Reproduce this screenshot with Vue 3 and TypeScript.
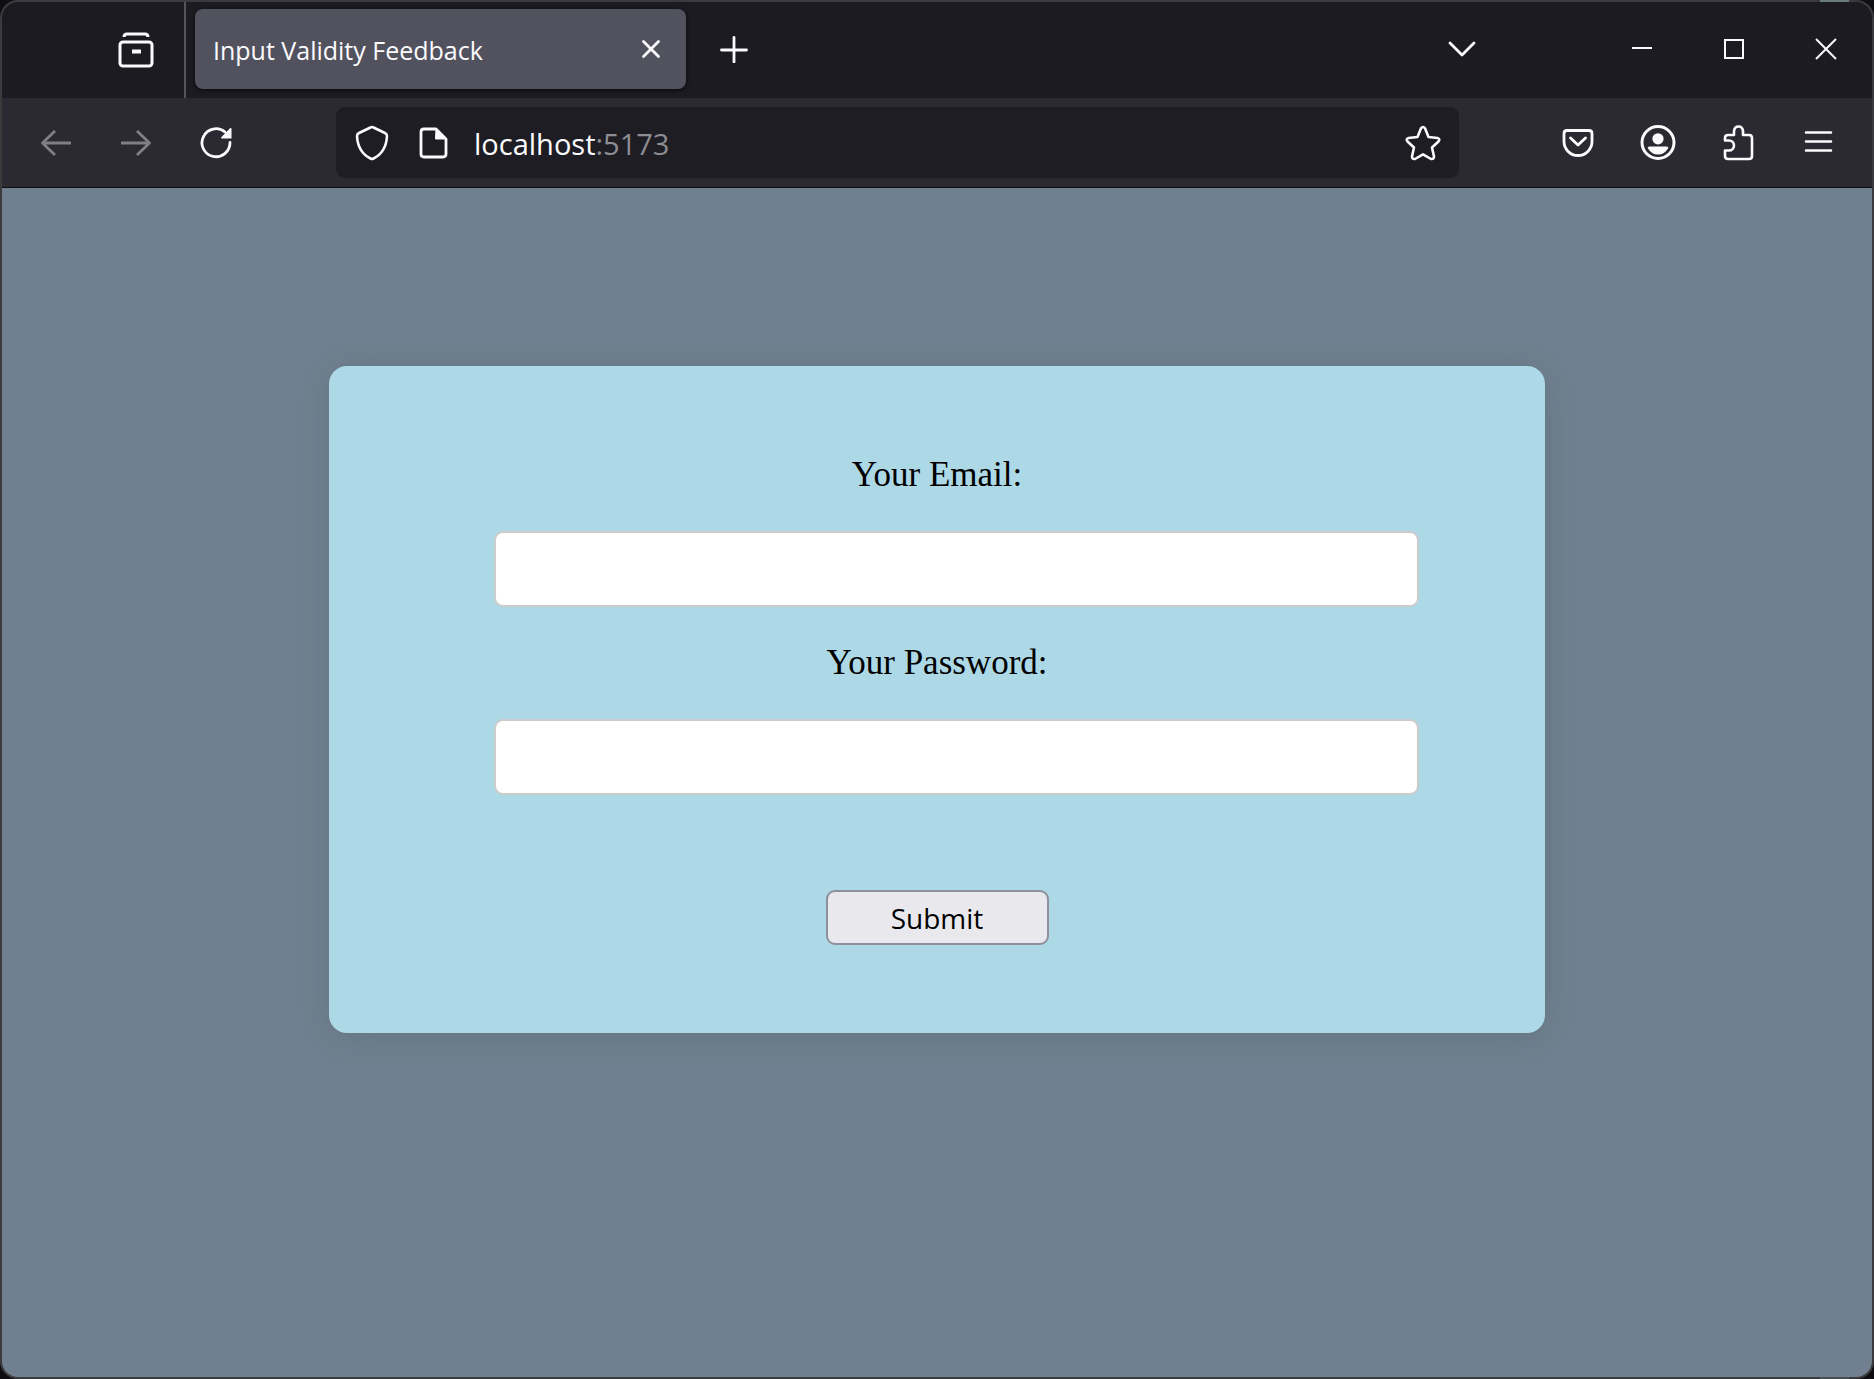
<script setup lang="ts">
import { ref } from 'vue'

const email = ref('')
const password = ref('')
</script>

<template>
  <div class="frame">
    <div class="window">
      <header class="tabbar">
        <button class="archive" aria-label="Firefox View">
          <svg width="36" height="36" viewBox="0 0 36 36">
            <path d="M6 5Q6 2 9 2H27Q30 2 30 5" fill="none" stroke="currentColor" stroke-width="3" />
            <rect x="2" y="10" width="32" height="24" rx="3" fill="none" stroke="currentColor" stroke-width="3" />
            <path d="M14 19.500H23" stroke="currentColor" stroke-width="4" />
          </svg>
        </button>
        <div class="tab">
          <span class="tab-title">Input Validity Feedback</span>
          <button class="tab-close" aria-label="Close tab">
            <svg width="20" height="20" viewBox="0 0 20 20">
              <path d="M2.500 2.500L17.500 17.500M17.500 2.500L2.500 17.500" fill="none" stroke="currentColor" stroke-width="2.800" stroke-linecap="round" />
            </svg>
          </button>
        </div>
        <button class="new-tab" aria-label="New tab">
          <svg width="28" height="28" viewBox="0 0 28 28">
            <path d="M14 2.500V27M1.500 15H26.500" stroke="currentColor" stroke-width="2.800" stroke-linecap="round" />
          </svg>
        </button>
        <button class="list-tabs" aria-label="List all tabs">
          <svg width="28" height="16" viewBox="0 0 28 16">
            <path d="M2 2L14 14L26 2" fill="none" stroke="currentColor" stroke-width="2.800" stroke-linecap="round" stroke-linejoin="round" />
          </svg>
        </button>
        <div class="controls">
          <button aria-label="Minimize">
            <svg width="20" height="22" viewBox="0 0 20 22"><path d="M0 10H20" stroke="currentColor" stroke-width="2" /></svg>
          </button>
          <button aria-label="Maximize">
            <svg width="20" height="20" viewBox="0 0 20 20"><rect x="1" y="1" width="18" height="18" fill="none" stroke="currentColor" stroke-width="2" /></svg>
          </button>
          <button aria-label="Close">
            <svg width="22" height="22" viewBox="0 0 22 22"><path d="M1 1L21 21M21 1L1 21" stroke="currentColor" stroke-width="2" /></svg>
          </button>
        </div>
      </header>

      <nav class="toolbar">
        <button class="tool" aria-label="Back" disabled>
          <svg width="36" height="36" viewBox="0 0 36 36">
            <path d="M33 18H4M17 6L4.500 18L17 30" fill="none" stroke="currentColor" stroke-width="2.800" stroke-linejoin="round" />
          </svg>
        </button>
        <button class="tool" aria-label="Forward" disabled>
          <svg width="36" height="36" viewBox="0 0 36 36">
            <path d="M3 18H32M19 6L31.500 18L19 30" fill="none" stroke="currentColor" stroke-width="2.800" stroke-linejoin="round" />
          </svg>
        </button>
        <button class="tool" aria-label="Reload">
          <svg width="36" height="36" viewBox="0 0 36 36">
            <path d="M32 17.500A14 14 0 1 1 27 7" fill="none" stroke="currentColor" stroke-width="2.800" stroke-linecap="round" />
            <path d="M33.500 3.500V13.500H23.500Q22.500 13 23.500 12L32 3.200Q33 2.500 33.500 3.500Z" fill="currentColor" />
          </svg>
        </button>
        <div class="address">
          <svg class="shield" width="36" height="36" viewBox="0 0 36 36">
            <path d="M16.500 2.500Q18 1.500 19.500 2.500L31 8Q33 9 33 11C32.500 21 28.500 29 19.500 33.500Q18 34.300 16.500 33.500C7.500 29 3.500 21 3 11Q3 9 5 8Z" fill="none" stroke="currentColor" stroke-width="2.600" />
          </svg>
          <svg class="document" width="36" height="36" viewBox="0 0 36 36">
            <path d="M8 4H20L30 14V29Q30 32 27 32H8Q5 32 5 29V7Q5 4 8 4Z" fill="none" stroke="currentColor" stroke-width="2.800" stroke-linejoin="round" />
            <path d="M20 4L30 14H19.500Z" fill="currentColor" stroke="currentColor" />
          </svg>
          <span class="url">localhost<span class="port">:5173</span></span>
          <button class="star" aria-label="Bookmark this page">
            <svg width="36" height="36" viewBox="0 0 36 36">
              <path d="M16 3.300Q18 .8 20 3.300L23.500 12L32.500 13Q35.500 14 33.500 16.500L27 22.500L29 31.500Q29 34.500 26 34L18 29.300L10 34Q7 34.500 7 31.500L9 22.500L2.500 16.500Q.5 14 3.500 13L12.500 12Z" fill="none" stroke="currentColor" stroke-width="2.600" stroke-linejoin="round" />
            </svg>
          </button>
        </div>
        <button class="tool" aria-label="Save to Pocket">
          <svg width="36" height="36" viewBox="0 0 36 36">
            <path d="M7 5.500H29Q32 5.500 32 8.500V16.500A14 14 0 0 1 4 16.500V8.500Q4 5.500 7 5.500Z" fill="none" stroke="currentColor" stroke-width="2.800" />
            <path d="M10.500 13L18 20L25.500 13" fill="none" stroke="currentColor" stroke-width="2.800" stroke-linecap="round" stroke-linejoin="round" />
          </svg>
        </button>
        <button class="tool" aria-label="Account">
          <svg width="36" height="36" viewBox="0 0 36 36">
            <circle cx="18" cy="17.500" r="16" fill="none" stroke="currentColor" stroke-width="3" />
            <circle cx="18" cy="13.800" r="5.600" fill="currentColor" />
            <path d="M10 21.500H26Q29 21.500 28 23.500Q24.500 29.500 18 29.500T8 23.500Q7 21.500 10 21.500Z" fill="currentColor" />
          </svg>
        </button>
        <button class="tool" aria-label="Extensions">
          <svg width="36" height="36" viewBox="0 0 36 36">
            <path d="M8 10H14V6Q14.500 1.500 18.500 1.500T23 6V10H29Q32 10 32 13V31Q32 34 29 34H8Q5 34 5 31V25.500H9A5 5 0 0 0 9 15.500H5V13Q5 10 8 10Z" fill="none" stroke="currentColor" stroke-width="2.600" stroke-linejoin="round" />
          </svg>
        </button>
        <button class="tool" aria-label="Menu">
          <svg width="36" height="36" viewBox="0 0 36 36">
            <path d="M6 7.500H31M6 16.500H31M6 25.500H31" stroke="currentColor" stroke-width="2.600" stroke-linecap="round" />
          </svg>
        </button>
      </nav>

      <main class="page">
        <form class="card" @submit.prevent>
          <label for="email">Your Email:</label>
          <input id="email" v-model="email" type="email" />
          <label for="password">Your Password:</label>
          <input id="password" v-model="password" type="password" />
          <button class="submit" type="submit">Submit</button>
        </form>
      </main>
    </div>
  </div>
</template>

<style>
body {
  margin: 0;
  background: #0e0e10;
}
</style>

<style scoped>
* {
  box-sizing: border-box;
}

.frame {
  display: flex;
  min-height: 100vh;
  padding: 2px;
  border-radius: 18px;
  background:
    linear-gradient(#6b7a7e, #6b7a7e) right 25px top 0 / 29px 2px no-repeat,
    linear-gradient(#465053, #465053) right 25px bottom 0 / 29px 2px no-repeat,
    #3b3b3e;
}

.window {
  flex: 1;
  display: flex;
  flex-direction: column;
  min-width: 0;
  border-radius: 16px;
  overflow: hidden;
  color: #fbfbfe;
  font-family: "Open Sans", "Noto Sans", sans-serif;
}

.window button {
  padding: 0;
  border: 0;
  background: none;
  color: inherit;
}

svg {
  display: block;
  flex: none;
}

.tabbar {
  display: flex;
  align-items: center;
  height: 96px;
  padding-bottom: 2px;
  background: #1c1b22;
}

.window .archive {
  display: flex;
  align-items: center;
  justify-content: flex-end;
  align-self: flex-start;
  width: 184px;
  height: 96px;
  padding-right: 30px;
  border-right: 2px solid #55545e;
}

.tab {
  display: flex;
  align-items: center;
  justify-content: space-between;
  width: 491px;
  height: 80px;
  margin-left: 9px;
  padding: 0 25px 0 18px;
  border-radius: 8px;
  background: #52525e;
  box-shadow: 0 1px 4px rgba(0, 0, 0, 0.7);
}

.tab-title {
  padding-top: 2px;
  font-size: 25px;
  line-height: 32px;
  white-space: nowrap;
}

.new-tab {
  margin-left: 34px;
}

.list-tabs {
  margin-left: auto;
}

.controls {
  display: flex;
  margin-left: 120px;
}

.controls button {
  display: flex;
  align-items: center;
  justify-content: center;
  width: 92px;
  height: 94px;
}

.toolbar {
  display: flex;
  align-items: center;
  height: 90px;
  padding: 0 14px;
  border-bottom: 1px solid #0c0c0d;
  background: #2b2a33;
}

.tool {
  display: flex;
  align-items: center;
  justify-content: center;
  width: 80px;
  height: 72px;
}

.tool:disabled {
  color: #807f85;
}

.address {
  flex: 1;
  display: flex;
  align-items: center;
  height: 71px;
  margin: 0 79px 0 80px;
  padding: 0 18px;
  border-radius: 9px;
  background: #1e1d24;
}

.document {
  margin-left: 26px;
}

.url {
  flex: 1;
  margin-left: 22px;
  padding-top: 2px;
  font-size: 29px;
  line-height: 40px;
}

.port {
  color: #8d8d92;
}

.page {
  flex: 1;
  padding: 178px 0;
  background: #708090;
}

.card {
  display: flex;
  flex-direction: column;
  width: 65%;
  margin: 0 auto;
  padding: 89px 0 88px;
  border-radius: 18px;
  background: #add8e6;
  box-shadow: 0 4px 36px rgba(0, 0, 0, 0.1);
  color: #000;
}

.card label {
  font: 35px/40px "Liberation Serif", serif;
  text-align: center;
}

.card input {
  height: 76px;
  margin: 36px 126px 36px 165px;
  padding: 0 18px;
  border: 2px solid #ccc;
  border-radius: 9px;
  background: #fff;
  font: 29px "Open Sans", sans-serif;
}

.card .submit {
  align-self: center;
  width: 223px;
  height: 55px;
  margin-top: 59px;
  border: 2px solid #8f8f9d;
  border-radius: 9px;
  background: #e9e9ed;
  color: #000;
  font: 28px "Open Sans", "Noto Sans", sans-serif;
}
</style>
